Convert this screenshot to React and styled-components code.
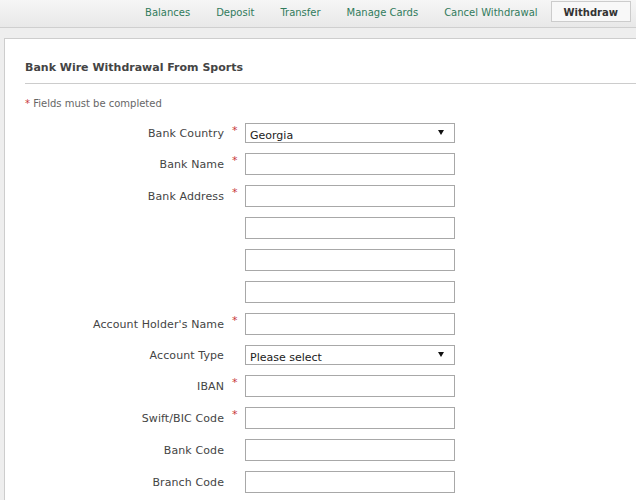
import React from 'react';
import styled, { css, createGlobalStyle } from 'styled-components';

const GlobalStyle = createGlobalStyle`
  html, body {
    margin: 0;
    padding: 0;
  }
  body {
    background: #eeeeee;
    font-family: "DejaVu Sans", Verdana, sans-serif;
    color: #444;
  }
`;

const Page = styled.div`
  min-height: 500px;
  display: flex;
  flex-direction: column;
`;

const TabBar = styled.nav`
  height: 27px;
  border-bottom: 1px solid #cfcfcf;
  background: linear-gradient(#f6f6f6, #e8e8e8);
  display: flex;
  justify-content: flex-end;
  align-items: flex-start;
  padding-right: 5px;
`;

const Tab = styled.a`
  box-sizing: border-box;
  height: 21px;
  margin-top: 1px;
  padding: 1px 12px 0;
  display: flex;
  align-items: center;
  font-size: 10px;
  color: #317b5c;
  text-decoration: none;
  white-space: nowrap;
  border: 1px solid transparent;
  cursor: pointer;

  ${p =>
    p.$active &&
    css`
      background: #f8f8f8;
      border-color: #cccccc;
      color: #333;
      font-weight: bold;
    `};
`;

const Panel = styled.main`
  flex: 1;
  margin: 10px 0 0 4px;
  background: #fff;
  border-top: 1px solid #cdcdcd;
  border-left: 1px solid #cdcdcd;
  padding: 0 0 20px 20px;
`;

const Title = styled.h2`
  margin: 0;
  padding: 22px 0 8px;
  font-size: 11px;
  line-height: 14px;
  font-weight: bold;
  color: #444;
  border-bottom: 1px solid #cccccc;
`;

const Note = styled.p`
  margin: 13px 0 13px;
  font-size: 10px;
  line-height: 13px;
  color: #666;
`;

const Star = styled.span`
  color: #c8383a;
  ${p =>
    p.$cell &&
    css`
      align-self: start;
      padding: 2px 0 0 7px;
      font-size: 11px;
      line-height: 11px;
    `};
`;

const Form = styled.form`
  display: grid;
  grid-template-columns: 200px 20px 210px;
  row-gap: 10px;
`;

const Label = styled.label`
  justify-self: end;
  align-self: center;
  padding-right: 1px;
  font-size: 11px;
  letter-spacing: 0.1px;
  color: #444;
  white-space: nowrap;
`;

const TextInput = styled.input`
  box-sizing: border-box;
  width: 210px;
  height: 22px;
  margin: 0;
  padding: 0 4px;
  border: 1px solid #a8a8a8;
  border-radius: 0;
  font: 11px "DejaVu Sans", Verdana, sans-serif;
  color: #222;
  outline: none;
`;

const SelectBox = styled.div`
  position: relative;
  box-sizing: border-box;
  width: 210px;
  height: 20px;
  border: 1px solid #a8a8a8;
  background: #fff;
`;

const Select = styled.select`
  appearance: none;
  width: 100%;
  height: 100%;
  margin: 0;
  padding: 0 4px;
  border: none;
  background: transparent;
  font: 11px "DejaVu Sans", Verdana, sans-serif;
  color: #222;
  outline: none;
`;

const Arrow = styled.svg`
  position: absolute;
  right: 10px;
  top: 6px;
  pointer-events: none;
`;

const tabs = ['Balances', 'Deposit', 'Transfer', 'Manage Cards', 'Cancel Withdrawal', 'Withdraw'];

const fields = [
  { label: 'Bank Country', required: true, select: 'Georgia' },
  { label: 'Bank Name', required: true },
  { label: 'Bank Address', required: true },
  { label: '' },
  { label: '' },
  { label: '' },
  { label: "Account Holder's Name", required: true },
  { label: 'Account Type', select: 'Please select' },
  { label: 'IBAN', required: true },
  { label: 'Swift/BIC Code', required: true },
  { label: 'Bank Code' },
  { label: 'Branch Code' },
];

const Field = ({ label, required, select }) => (
  <>
    <Label>{label}</Label>
    {required ? <Star $cell>*</Star> : <span />}
    {select ? (
      <SelectBox>
        <Select defaultValue={select}>
          <option>{select}</option>
        </Select>
        <Arrow width="6" height="5" viewBox="0 0 6 5">
          <polygon points="0,0 6,0 3,5" fill="#111" />
        </Arrow>
      </SelectBox>
    ) : (
      <TextInput type="text" />
    )}
  </>
);

export default function App() {
  return (
    <Page>
      <GlobalStyle />
      <TabBar>
        {tabs.map(t => (
          <Tab key={t} $active={t === 'Withdraw'}>
            {t}
          </Tab>
        ))}
      </TabBar>
      <Panel>
        <Title>Bank Wire Withdrawal From Sports</Title>
        <Note>
          <Star>*</Star> Fields must be completed
        </Note>
        <Form onSubmit={e => e.preventDefault()}>
          {fields.map((f, i) => (
            <Field key={i} {...f} />
          ))}
        </Form>
      </Panel>
    </Page>
  );
}
